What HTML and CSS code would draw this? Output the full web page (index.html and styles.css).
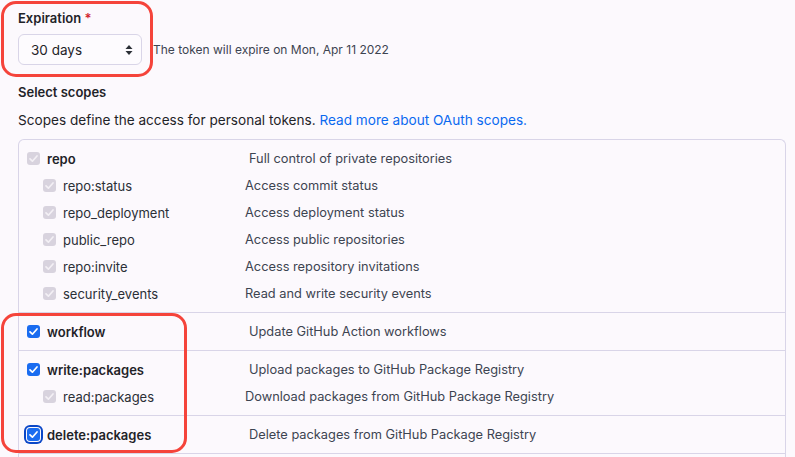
FILE: index.html
```html
<!DOCTYPE html>
<html>
<head>
<meta charset="utf-8">
<link rel="stylesheet" href="styles.css">
</head>
<body>
<div class="page">
  <div class="field">
    <div class="label-title">Expiration <span class="req">*</span></div>
    <div class="exp-row">
      <div class="select">
        <span>30 days</span>
        <svg class="caret" width="8" height="12" viewBox="0 0 8 12"><path d="M4 1 L7.5 5 H0.5 Z M4 11 L7.5 7 H0.5 Z" fill="#2b2f36"/></svg>
      </div>
      <span class="exp-note">The token will expire on Mon, Apr 11 2022</span>
    </div>
  </div>

  <div class="scopes-title">Select scopes</div>
  <p class="scopes-desc">Scopes define the access for personal tokens. <a href="#">Read more about OAuth scopes.</a></p>

  <div class="scopes-box">
    <div class="group">
      <div class="row parent">
        <span class="cb gray"><svg viewBox="0 0 13 13"><path d="M3 6.8 L5.4 9.2 L10 4" /></svg></span>
        <span class="name">repo</span>
        <span class="desc">Full control of private repositories</span>
      </div>
      <div class="row child">
        <span class="cb gray"><svg viewBox="0 0 13 13"><path d="M3 6.8 L5.4 9.2 L10 4" /></svg></span>
        <span class="name">repo:status</span>
        <span class="desc">Access commit status</span>
      </div>
      <div class="row child">
        <span class="cb gray"><svg viewBox="0 0 13 13"><path d="M3 6.8 L5.4 9.2 L10 4" /></svg></span>
        <span class="name">repo_deployment</span>
        <span class="desc">Access deployment status</span>
      </div>
      <div class="row child">
        <span class="cb gray"><svg viewBox="0 0 13 13"><path d="M3 6.8 L5.4 9.2 L10 4" /></svg></span>
        <span class="name">public_repo</span>
        <span class="desc">Access public repositories</span>
      </div>
      <div class="row child">
        <span class="cb gray"><svg viewBox="0 0 13 13"><path d="M3 6.8 L5.4 9.2 L10 4" /></svg></span>
        <span class="name">repo:invite</span>
        <span class="desc">Access repository invitations</span>
      </div>
      <div class="row child">
        <span class="cb gray"><svg viewBox="0 0 13 13"><path d="M3 6.8 L5.4 9.2 L10 4" /></svg></span>
        <span class="name">security_events</span>
        <span class="desc">Read and write security events</span>
      </div>
    </div>
    <div class="group">
      <div class="row parent">
        <span class="cb blue"><svg viewBox="0 0 13 13"><path d="M3 6.8 L5.4 9.2 L10 4" /></svg></span>
        <span class="name">workflow</span>
        <span class="desc">Update GitHub Action workflows</span>
      </div>
    </div>
    <div class="group">
      <div class="row parent">
        <span class="cb blue"><svg viewBox="0 0 13 13"><path d="M3 6.8 L5.4 9.2 L10 4" /></svg></span>
        <span class="name">write:packages</span>
        <span class="desc">Upload packages to GitHub Package Registry</span>
      </div>
      <div class="row child">
        <span class="cb gray"><svg viewBox="0 0 13 13"><path d="M3 6.8 L5.4 9.2 L10 4" /></svg></span>
        <span class="name">read:packages</span>
        <span class="desc">Download packages from GitHub Package Registry</span>
      </div>
    </div>
    <div class="group">
      <div class="row parent">
        <span class="cb blue focus"><svg viewBox="0 0 13 13"><path d="M3 6.8 L5.4 9.2 L10 4" /></svg></span>
        <span class="name">delete:packages</span>
        <span class="desc">Delete packages from GitHub Package Registry</span>
      </div>
    </div>
    <div class="group last"></div>
  </div>

  <div class="mark mark-exp"></div>
  <div class="mark mark-scopes"></div>
</div>
</body>
</html>
```

FILE: styles.css
```css
html, body {
  margin: 0;
  padding: 0;
  background: #fcf9fd;
}
body {
  font-family: Inter, "Noto Sans", "Liberation Sans", sans-serif;
  color: #1f2328;
  font-size: 13px;
  overflow: hidden;
  height: 457px;
}
.page {
  position: relative;
  padding: 10px 0 0 18px;
}
.label-title {
  font-weight: 600;
  font-size: 13px;
  line-height: 16px;
}
.req { color: #d1242f; }
.exp-row {
  display: flex;
  align-items: center;
  margin-top: 8px;
}
.select {
  box-sizing: border-box;
  width: 124px;
  height: 31px;
  border: 1px solid #d9d5e8;
  border-radius: 6px;
  background: #fdfbfe;
  display: flex;
  align-items: center;
  justify-content: space-between;
  padding: 0 8px 0 12px;
  font-size: 13.5px;
}
.caret { display: block; }
.exp-note {
  margin-left: 11px;
  font-size: 12px;
  color: #3d4451;
}
.scopes-title {
  margin-top: 19px;
  font-weight: 600;
  font-size: 13px;
  line-height: 16px;
}
.scopes-desc {
  margin: 12px 0 0;
  font-size: 13.6px;
  line-height: 16px;
}
.scopes-desc a { color: #0a69f0; text-decoration: none; }
.scopes-box {
  margin-top: 11px;
  margin-right: 9px;
  border: 1px solid #d9d5e8;
  border-bottom: none;
  border-radius: 6px 6px 0 0;
}
.group {
  padding: 5px 0;
  border-top: 1px solid #d9d5e8;
}
.group:first-child { border-top: none; padding-top: 5px; }
.group.last { padding: 0; height: 10px; }
.row {
  display: flex;
  align-items: center;
  height: 27px;
  padding-left: 8px;
}
.row.child { padding-left: 24px; }
.cb {
  box-sizing: border-box;
  width: 13px;
  height: 13px;
  border-radius: 3px;
  flex: none;
  display: block;
}
.cb svg { display: block; width: 13px; height: 13px; }
.cb svg path {
  fill: none;
  stroke-width: 1.7;
  stroke-linecap: round;
  stroke-linejoin: round;
}
.cb.gray { background: #d8d3de; }
.cb.gray path { stroke: #f3f0f5; }
.cb.blue { background: #1a6cf0; }
.cb.blue path { stroke: #ffffff; }
.cb.focus {
  box-shadow: 0 0 0 1px #fcf9fd, 0 0 0 3px #0b47c7;
}
.name {
  margin-left: 7px;
  width: 202px;
  flex: none;
  font-size: 13px;
}
.parent .name { font-weight: 600; }
.child .name { width: 182px; color: #2b2f36; }
.desc {
  font-size: 12.8px;
  color: #3d4451;
}
.mark {
  position: absolute;
  border: 3.5px solid #f5443b;
  border-radius: 15px;
  box-sizing: border-box;
}
.mark-exp {
  left: 1px;
  top: 1px;
  width: 152px;
  height: 76px;
}
.mark-scopes {
  left: 1px;
  top: 313px;
  width: 186px;
  height: 140px;
}
```
